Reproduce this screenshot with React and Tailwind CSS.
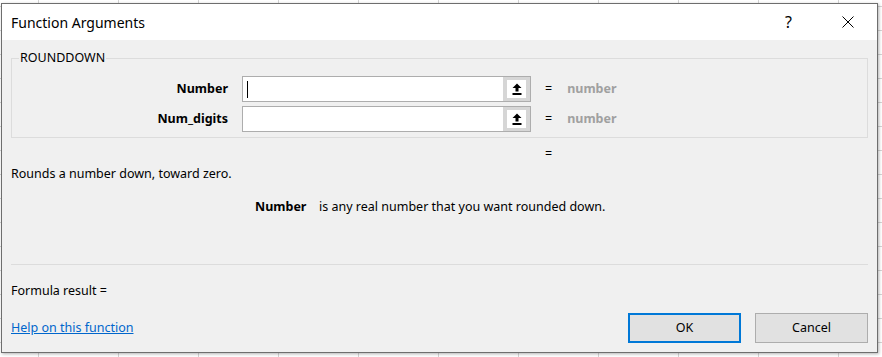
import React from 'react';

const font = { fontFamily: '"Noto Sans", "Open Sans", sans-serif' };

const UploadIcon = () => (
  <svg width="10" height="13" viewBox="0 0 10 13">
    <path d="M5 0.5 L9.5 5 L6.5 5 L6.5 8.5 L3.5 8.5 L3.5 5 L0.5 5 Z" fill="#000" />
    <rect x="0.5" y="10" width="9" height="2" fill="#000" />
  </svg>
);

const ArgRow = ({ label, focused }) => (
  <div className="flex items-center h-[26px]">
    <div className="w-[216px] text-right font-bold text-[12.5px] text-[#000]">{label}</div>
    <div className="ml-[14px] flex h-[26px] w-[289px] border border-[#adadad] bg-white">
      <div className="flex-1 flex items-center pl-[4px]">
        {focused && <div className="w-px h-[17px] bg-black" />}
      </div>
      <div className="w-[27px] h-full bg-[#d6d6d6] p-[3px] pl-[4px] pr-[4px]">
        <div className="w-full h-full bg-white flex items-center justify-center">
          <UploadIcon />
        </div>
      </div>
    </div>
    <span className="ml-[14px] text-[12.5px] text-[#000]">=</span>
    <span className="ml-[15px] text-[12.5px] font-bold text-[#a0a0a0]">number</span>
  </div>
);

export default function App() {
  return (
    <div
      className="w-[882px] h-[357px] bg-white pl-[1px] pt-[3px] bg-[linear-gradient(to_right,#d4d4d4_1px,transparent_1px),linear-gradient(to_bottom,#d4d4d4_1px,transparent_1px)] bg-[length:80px_24px] bg-[position:38px_6px]"
      style={font}
    >
      <div className="w-[877px] h-[350px] border border-[#6e6e6e] bg-[#f0f0f0] flex flex-col shadow-[1px_1px_3px_rgba(0,0,0,0.3)]">
        <div className="h-[36px] bg-white flex items-center pl-[9px] text-[#000]">
          <span className="text-[14px]">Function Arguments</span>
          <span className="ml-auto text-[16px] mr-[50px]">?</span>
          <svg width="12" height="12" viewBox="0 0 12 12" className="mr-[23px]">
            <path d="M0.5 0.5 L11.5 11.5 M11.5 0.5 L0.5 11.5" stroke="#000" strokeWidth="1" />
          </svg>
        </div>

        <div className="flex-1 flex flex-col px-[9px] text-[12.5px] text-[#000]">
          <fieldset className="mt-[11px] h-[87px] border border-[#dcdcdc]">
            <legend className="ml-[7px] px-[1px] text-[12.5px] leading-[14px]">ROUNDDOWN</legend>
            <div className="mt-[11px] flex flex-col gap-[4px]">
              <ArgRow label="Number" focused />
              <ArgRow label="Num_digits" />
            </div>
          </fieldset>

          <div className="mt-[8px] h-[16px] leading-[16px] pl-[534px]">=</div>
          <div className="mt-[4px] h-[16px] leading-[16px]">Rounds a number down, toward zero.</div>
          <div className="mt-[17px] h-[16px] leading-[16px] pl-[244px] flex">
            <span className="font-bold w-[64px]">Number</span>
            <span>is any real number that you want rounded down.</span>
          </div>

          <div className="mt-[49px] h-px bg-[#dcdcdc]" />

          <div className="mt-[18px] h-[16px] leading-[16px]">Formula result =</div>

          <div className="mt-[14px] flex items-center h-[30px]">
            <a className="text-[#0066cc] underline">Help on this function</a>
            <button className="ml-auto w-[113px] h-[30px] bg-[#e1e1e1] border-2 border-[#0078d7] text-[12.5px]">OK</button>
            <button className="ml-[14px] w-[113px] h-[30px] bg-[#e1e1e1] border border-[#adadad] text-[12.5px]">Cancel</button>
          </div>
        </div>
      </div>
    </div>
  );
}
